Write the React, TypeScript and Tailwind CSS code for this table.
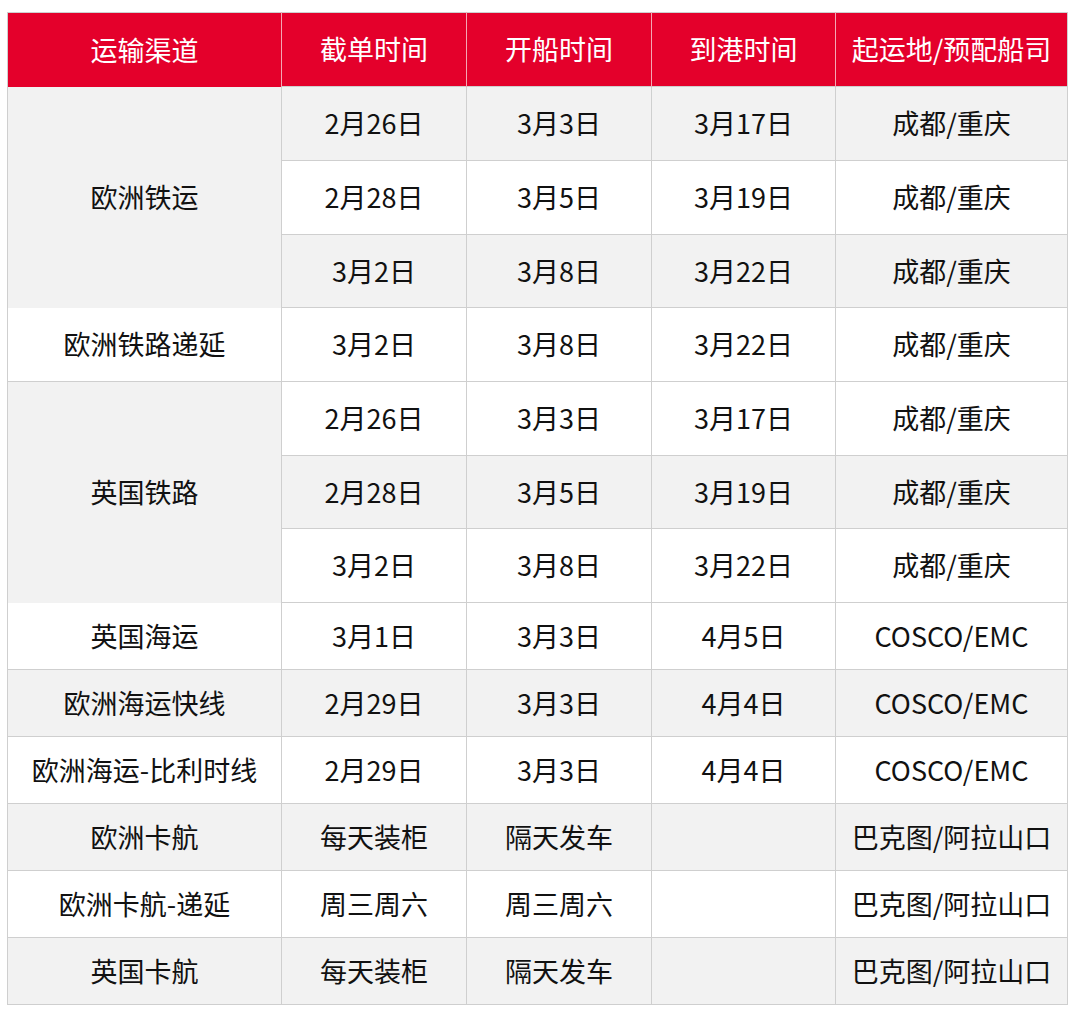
import * as React from "react"

type Row = {
  channel?: string
  span?: number
  cut: string
  sail: string
  arrive: string
  origin: string
  gray: boolean
  h: string
}

const rows: Row[] = [
  { channel: "欧洲铁运", span: 3, cut: "2月26日", sail: "3月3日", arrive: "3月17日", origin: "成都/重庆", gray: true, h: "h-[74px]" },
  { cut: "2月28日", sail: "3月5日", arrive: "3月19日", origin: "成都/重庆", gray: false, h: "h-[74px]" },
  { cut: "3月2日", sail: "3月8日", arrive: "3月22日", origin: "成都/重庆", gray: true, h: "h-[73px]" },
  { channel: "欧洲铁路递延", span: 1, cut: "3月2日", sail: "3月8日", arrive: "3月22日", origin: "成都/重庆", gray: false, h: "h-[74px]" },
  { channel: "英国铁路", span: 3, cut: "2月26日", sail: "3月3日", arrive: "3月17日", origin: "成都/重庆", gray: false, h: "h-[74px]" },
  { cut: "2月28日", sail: "3月5日", arrive: "3月19日", origin: "成都/重庆", gray: true, h: "h-[73px]" },
  { cut: "3月2日", sail: "3月8日", arrive: "3月22日", origin: "成都/重庆", gray: false, h: "h-[74px]" },
  { channel: "英国海运", span: 1, cut: "3月1日", sail: "3月3日", arrive: "4月5日", origin: "COSCO/EMC", gray: false, h: "h-[67px]" },
  { channel: "欧洲海运快线", span: 1, cut: "2月29日", sail: "3月3日", arrive: "4月4日", origin: "COSCO/EMC", gray: true, h: "h-[67px]" },
  { channel: "欧洲海运-比利时线", span: 1, cut: "2月29日", sail: "3月3日", arrive: "4月4日", origin: "COSCO/EMC", gray: false, h: "h-[67px]" },
  { channel: "欧洲卡航", span: 1, cut: "每天装柜", sail: "隔天发车", arrive: "", origin: "巴克图/阿拉山口", gray: true, h: "h-[67px]" },
  { channel: "欧洲卡航-递延", span: 1, cut: "周三周六", sail: "周三周六", arrive: "", origin: "巴克图/阿拉山口", gray: false, h: "h-[67px]" },
  { channel: "英国卡航", span: 1, cut: "每天装柜", sail: "隔天发车", arrive: "", origin: "巴克图/阿拉山口", gray: true, h: "h-[67px]" },
]

const headers = ["运输渠道", "截单时间", "开船时间", "到港时间", "起运地/预配船司"]

export default function App() {
  return (
    <div className="min-h-[1018px] bg-white pt-[12px] pl-[7px] font-['Noto_Sans_CJK_SC','Noto_Sans',sans-serif] text-[27px] text-[#111]">
      <table className="w-[1060px] table-fixed border-collapse border border-[#cfcfcf]">
        <colgroup>
          <col className="w-[274px]" />
          <col className="w-[185px]" />
          <col className="w-[185px]" />
          <col className="w-[184px]" />
          <col className="w-[232px]" />
        </colgroup>
        <thead>
          <tr className="h-[74px] bg-[#e4002b] text-white">
            {headers.map((h, i) => (
              <th
                key={h}
                className={`p-0 text-center font-normal ${i < headers.length - 1 ? "border-r border-[#f3a7b4]" : ""}`}
              >
                {h}
              </th>
            ))}
          </tr>
        </thead>
        <tbody>
          {rows.map((r, i) => {
            const rowBg = r.gray ? "bg-[#f2f2f2]" : "bg-white"
            const chanGray = r.channel === "欧洲铁运" || r.channel === "英国铁路"
            return (
              <tr key={i} className={r.h}>
                {r.channel && (
                  <td
                    rowSpan={r.span}
                    className={`p-0 text-center border-r border-[#cfcfcf] ${
                      chanGray ? "bg-[#f2f2f2]" : `${rowBg} border-b`
                    }`}
                  >
                    {r.channel}
                  </td>
                )}
                <td className={`p-0 text-center border border-[#cfcfcf] ${rowBg}`}>{r.cut}</td>
                <td className={`p-0 text-center border border-[#cfcfcf] ${rowBg}`}>{r.sail}</td>
                <td className={`p-0 text-center border border-[#cfcfcf] ${rowBg}`}>{r.arrive}</td>
                <td className={`p-0 text-center border border-[#cfcfcf] ${rowBg}`}>{r.origin}</td>
              </tr>
            )
          })}
        </tbody>
      </table>
    </div>
  )
}
